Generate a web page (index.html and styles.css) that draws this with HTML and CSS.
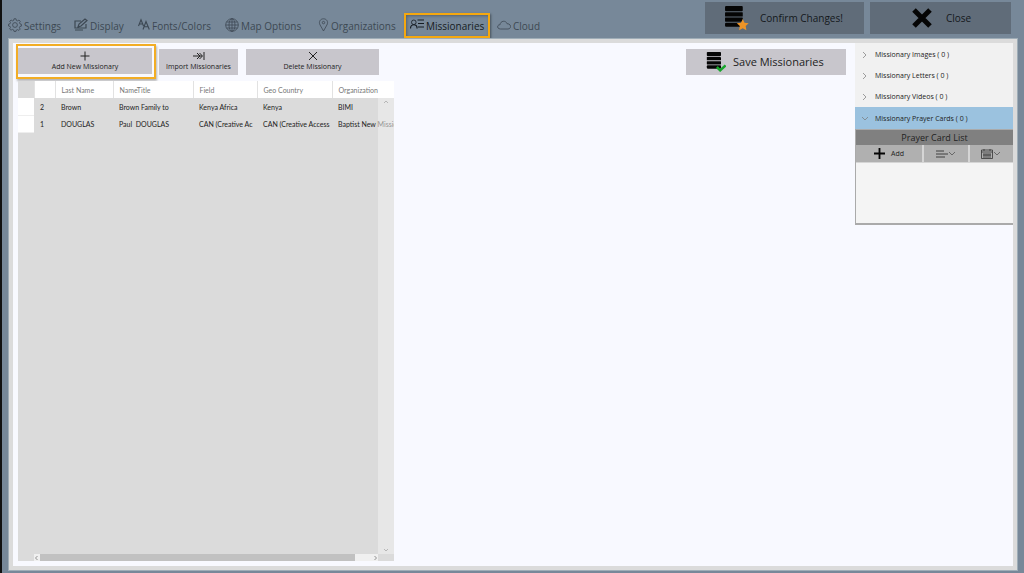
FILE: index.html
```
<!DOCTYPE html>
<html lang="en">
<head>
<meta charset="utf-8">
<title>Missionaries</title>
<link rel="stylesheet" href="styles.css">
</head>
<body>
<svg class="defs" width="0" height="0" aria-hidden="true">
  <symbol id="stack" viewBox="0 0 24 24">
    <g fill="#050505"><rect x="1" y="0" width="17" height="5" rx="1"/><rect x="1" y="6" width="17" height="4" rx=".5"/><rect x="1" y="11" width="17" height="4" rx=".5"/><rect x="1" y="16" width="17" height="4" rx="1"/></g>
  </symbol>
  <symbol id="down" viewBox="0 0 8 5"><path d="M1 1l3 3 3-3" fill="none" stroke="#555" stroke-width=".8"/></symbol>
</svg>
<div class="app">
  <header class="header">
    <nav class="tabs">
      <a class="tab" href="#"><svg class="icon" viewBox="0 0 14 14"><path d="M6 .8h2l.4 1.600 1.200.5 1.400-.9 1.300 1.400-.8 1.300.5 1.200 1.400.4v1.800l-1.500.4-.5 1.200.8 1.400-1.300 1.300-1.400-.8-1.200.5L8 13.400H6l-.4-1.500-1.200-.5-1.400.8-1.400-1.300.9-1.400-.5-1.200L.5 8V6.200L2 5.800l.5-1.200-.8-1.300L3.100 2l1.300.9 1.200-.5z"/><circle cx="7" cy="7" r="2.400"/></svg><span>Settings</span></a>
      <a class="tab" href="#"><svg class="icon" viewBox="0 0 14 14"><path d="M7 3H1v7h11V6M1 12h8M4 9l1-3 6-5 2 1.500-6 5.500z" stroke-width="1.200"/></svg><span>Display</span></a>
      <a class="tab" href="#"><svg class="icon small" viewBox="0 0 12 12"><path d="M.5 7L3 .8 5.500 7M1.300 5h3.400M5 10.500l3-8 3.300 8M6 7.800h4.300" stroke-width="1.100"/></svg><span>Fonts/Colors</span></a>
      <a class="tab" href="#"><svg class="icon" viewBox="0 0 14 14"><circle cx="7" cy="7" r="6.300"/><ellipse cx="7" cy="7" rx="3" ry="6.300"/><path d="M7 .7v12.600M.7 7h12.600M1.500 4h11M1.500 10h11"/></svg><span>Map Options</span></a>
      <a class="tab" href="#"><svg class="icon pin" viewBox="0 0 10 14"><path d="M5 13L1.600 7C-.2 3.600 2 .8 5 .8S10.200 3.600 8.400 7z"/><circle cx="5" cy="4.600" r="1.200"/></svg><span>Organizations</span></a>
      <a class="tab active" href="#" aria-current="page"><svg class="icon" viewBox="0 0 14 14"><circle cx="3.800" cy="4.300" r="2.300"/><path d="M.5 10.500c0-5 6.600-5 6.600 0M7.500 2H14M8 5.500h6M8 9h6" stroke-width="1.200"/></svg><span>Missionaries</span></a>
      <a class="tab" href="#"><svg class="icon" viewBox="0 0 14 14"><path d="M3.500 11C-.4 11-.1 6.500 3 6.800 3.300 2.600 9 2 10 5.700c4.500-.3 4.600 5.300 1 5.300z"/></svg><span>Cloud</span></a>
    </nav>
    <div class="actions">
      <button class="action confirm"><svg class="big" viewBox="0 0 24 24"><use href="#stack"/><path d="M18 12.500l1.700 3.500 4 .6-2.900 2.700.7 4L18 21.400l-3.500 1.900.7-4-2.900-2.700 4-.6z" fill="#ee9427"/></svg><span>Confirm Changes!</span></button>
      <button class="action close"><svg class="cross" viewBox="0 0 20 20"><path d="M2 2l16 16M18 2L2 18" stroke="#050505" stroke-width="5"/></svg><span>Close</span></button>
    </div>
  </header>
  <main class="frame">
    <section class="content">
      <div class="toolbar">
        <div class="focus"><button class="tool"><svg class="glyph" viewBox="0 0 10 10"><path d="M5 .5v9M.5 5h9"/></svg><span>Add New Missionary</span></button></div>
        <button class="tool import"><svg class="glyph wide" viewBox="0 0 12 10"><path d="M0 5h9M4 2l3 3-3 3M6.500 2l3 3-3 3M11 1v8"/></svg><span>Import Missionaries</span></button>
        <button class="tool delete"><svg class="glyph" viewBox="0 0 10 10"><path d="M1 1l8 8M9 1L1 9"/></svg><span>Delete Missionary</span></button>
        <button class="save"><svg class="disk" viewBox="0 0 24 24"><use href="#stack"/><path d="M13 18l4 4 6.500-6" fill="none" stroke="#17a52b" stroke-width="3"/></svg><span>Save Missionaries</span></button>
      </div>
      <div class="list">
        <table class="grid">
          <colgroup><col class="c0"><col class="c1"><col class="c2"><col class="c3"><col class="c4"><col class="c5"><col class="c6"></colgroup>
          <thead><tr><th></th><th></th><th>Last Name</th><th>NameTitle</th><th>Field</th><th>Geo Country</th><th>Organization</th></tr></thead>
          <tbody>
            <tr><td></td><td>2</td><td>Brown</td><td>Brown Family to</td><td>Kenya Africa</td><td>Kenya</td><td>BIMI</td></tr>
            <tr><td></td><td>1</td><td>DOUGLAS</td><td>Paul&nbsp; DOUGLAS</td><td>CAN (Creative Ac</td><td>CAN (Creative Access</td><td>Baptist New Missic</td></tr>
          </tbody>
        </table>
        <div class="vbar"><svg viewBox="0 0 6 4"><path d="M1 3l2-2 2 2"/></svg><svg viewBox="0 0 6 4"><path d="M1 1l2 2 2-2"/></svg></div>
        <div class="hbar"><svg viewBox="0 0 4 6"><path d="M3 1L1 3l2 2"/></svg><div class="track"><div class="thumb"></div></div><svg viewBox="0 0 4 6"><path d="M1 1l2 2-2 2"/></svg></div>
      </div>
    </section>
    <aside class="side">
      <button class="fold"><svg viewBox="0 0 6 8"><path d="M1 1l3 3-3 3"/></svg><span>Missionary Images ( 0 )</span></button>
      <button class="fold"><svg viewBox="0 0 6 8"><path d="M1 1l3 3-3 3"/></svg><span>Missionary Letters ( 0 )</span></button>
      <button class="fold"><svg viewBox="0 0 6 8"><path d="M1 1l3 3-3 3"/></svg><span>Missionary Videos ( 0 )</span></button>
      <button class="fold open" aria-expanded="true"><svg viewBox="0 0 6 8"><path d="M0 3l3 3 3-3"/></svg><span>Missionary Prayer Cards ( 0 )</span></button>
      <div class="cards">
        <h2>Prayer Card List</h2>
        <div class="cardbar">
          <button class="add"><svg class="plus" viewBox="0 0 12 12"><path d="M6 0v12M0 6h12" stroke="#050505" stroke-width="2"/></svg><span>Add</span></button>
          <button aria-label="Sort"><svg class="lines" viewBox="0 0 12 8"><path d="M0 1h8M0 4h12M0 7h9" stroke="#333" stroke-width=".9"/></svg><svg class="drop"><use href="#down"/></svg></button>
          <button aria-label="Date"><svg class="cal" viewBox="0 0 12 10"><path d="M.5 1h11v8.500H.5zM.5 3h11M3 0v2M9 0v2M3 4v5M5 4v5M7 4v5M9 4v5M2 6h8" fill="none" stroke="#333" stroke-width=".8"/></svg><svg class="drop"><use href="#down"/></svg></button>
        </div>
        <div class="empty"></div>
      </div>
    </aside>
  </main>
</div>
</body>
</html>
```
FILE: styles.css
```
* { box-sizing: border-box; }
body { margin: 0; font-family: "Open Sans", "Noto Sans", sans-serif; color: #222; background: #778899; }
button { border: 0; padding: 0; font: inherit; color: inherit; }
svg { flex: none; }
.defs { position: absolute; }
.app { display: flex; flex-direction: column; min-height: 100vh; border-left: 2px solid #111; padding: 0 6px 2px 6px; }
.header { display: flex; justify-content: space-between; height: 38px; }
.tabs { display: grid; grid-template-columns: 66px 64px 87px 93px 86px 93px 50px; align-items: end; }
.tab { display: flex; align-items: center; gap: 2px; height: 25px; color: #3d4853; font-size: 10px; text-decoration: none; white-space: nowrap; }
.icon { width: 14px; height: 14px; margin-bottom: 2px; fill: none; stroke: #3d4853; stroke-width: .8; }
.icon.small { width: 12px; }
.icon.pin { width: 11px; }
.tab.active { margin-right: 7px; padding: 0 4px; border: 2px solid #f5a80f; color: #161c22; box-shadow: 1px 1px 2px #46515c, inset 1px 1px 3px #55616d; }
.tab.active .icon { stroke: #161c22; }
.actions { display: flex; gap: 6px; padding: 2px 7px 4px 0; }
.action { display: flex; align-items: center; background: #606c79; color: #14181c; font-size: 10px; height: 32px; }
.confirm { width: 159px; padding-left: 19px; gap: 11px; }
.close { width: 141px; padding-left: 42px; gap: 14px; }
.big { width: 25px; height: 25px; }
.cross { width: 20px; height: 20px; }
.frame { flex: 1; display: flex; background: #f8f9ff; border: 5px solid #dbdbdb; outline: 1px solid #9fadb7; outline-offset: -1px; }
.content { flex: 1; display: flex; flex-direction: column; min-width: 0; padding: 1px 9px 5px 3px; }
.toolbar { display: flex; align-items: center; height: 35px; }
.focus { width: 140px; height: 35px; padding: 2px 2px 2px 0; border: 2px solid #f2ad26; box-shadow: 1px 2px 2px #b5b5b5; }
.tool { display: flex; flex-direction: column; align-items: center; justify-content: center; gap: 1px; height: 26px; background: #c8c6cc; font-size: 7px; line-height: 10px; white-space: nowrap; }
.focus .tool { width: 100%; }
.import { width: 79px; margin-left: 3px; }
.delete { width: 133px; margin-left: 8px; }
.glyph { width: 10px; height: 10px; fill: none; stroke: #222; stroke-width: 1; }
.glyph.wide { width: 12px; }
.save { display: flex; align-items: center; gap: 7px; width: 160px; height: 26px; margin-left: auto; padding-left: 20px; background: #c8c6cc; font-size: 11px; white-space: nowrap; }
.disk { width: 20px; height: 20px; }
.list { position: relative; flex: 1; width: 376px; margin: 2px 0 0 2px; background: #dbdbdb; overflow: hidden; }
.grid { width: 100%; table-layout: fixed; border-collapse: collapse; font-family: Lato, "Open Sans", sans-serif; font-size: 7px; line-height: 9px; }
.c0 { width: 16px; }
.c1 { width: 21px; }
.c2 { width: 58px; }
.c3 { width: 80px; }
.c4 { width: 64px; }
.c5 { width: 75px; }
.grid th, .grid td { height: 17px; padding: 1px 4px 0 6px; text-align: left; white-space: nowrap; overflow: hidden; }
.grid th { background: #fff; color: #777; font-weight: 400; border-right: 1px solid #e2e2e2; }
.grid th:first-child { background: #dbdbdb; }
.grid td:first-child { background: #fff; border-bottom: 1px solid #eee; }
.grid th:last-child, .grid td:last-child { padding-right: 0; border-right: 0; }
.vbar { position: absolute; right: 0; top: 17px; bottom: 7px; width: 16px; display: flex; flex-direction: column; align-items: center; justify-content: space-between; padding: 2px 0; background: rgba(240, 240, 240, .55); }
.vbar svg { width: 6px; height: 4px; fill: none; stroke: #aaa; stroke-width: .8; }
.hbar { position: absolute; left: 16px; right: 16px; bottom: 0; height: 7px; display: flex; align-items: center; gap: 1px; background: #f0f0f0; }
.hbar svg { width: 5px; height: 6px; fill: none; stroke: #777; stroke-width: .8; }
.track { flex: 1; height: 7px; }
.thumb { width: 95%; height: 7px; background: #c1c1c1; }
.side { width: 158px; padding-top: 1px; background: linear-gradient(#f1f1f1 20px, transparent 20px); }
.fold { display: flex; align-items: center; gap: 7px; width: 100%; height: 21px; padding-left: 7px; background: #f1f1f1; font-size: 7px; white-space: nowrap; }
.fold svg { width: 6px; height: 8px; fill: none; stroke: #777; stroke-width: .7; }
.fold.open { background: #9bc2df; height: 22px; }
.cards { border: solid #aaa; border-width: 1px 0 2px 1px; background: #f4f4f4; }
.cards h2 { margin: 0; height: 15px; background: #808080; font-size: 9px; line-height: 15px; font-weight: 400; text-align: center; }
.cardbar { display: grid; grid-template-columns: 66px 1fr 1fr; gap: 2px; height: 18px; background: #d5d5d5; padding-bottom: 1px; }
.cardbar button { display: flex; align-items: center; justify-content: center; background: #b0b0b0; font-size: 7px; }
.cardbar .add { gap: 6px; }
.plus { width: 11px; height: 11px; }
.lines { width: 12px; height: 8px; }
.cal { width: 12px; height: 10px; }
.drop { width: 8px; height: 5px; }
.empty { height: 60px; }
```
